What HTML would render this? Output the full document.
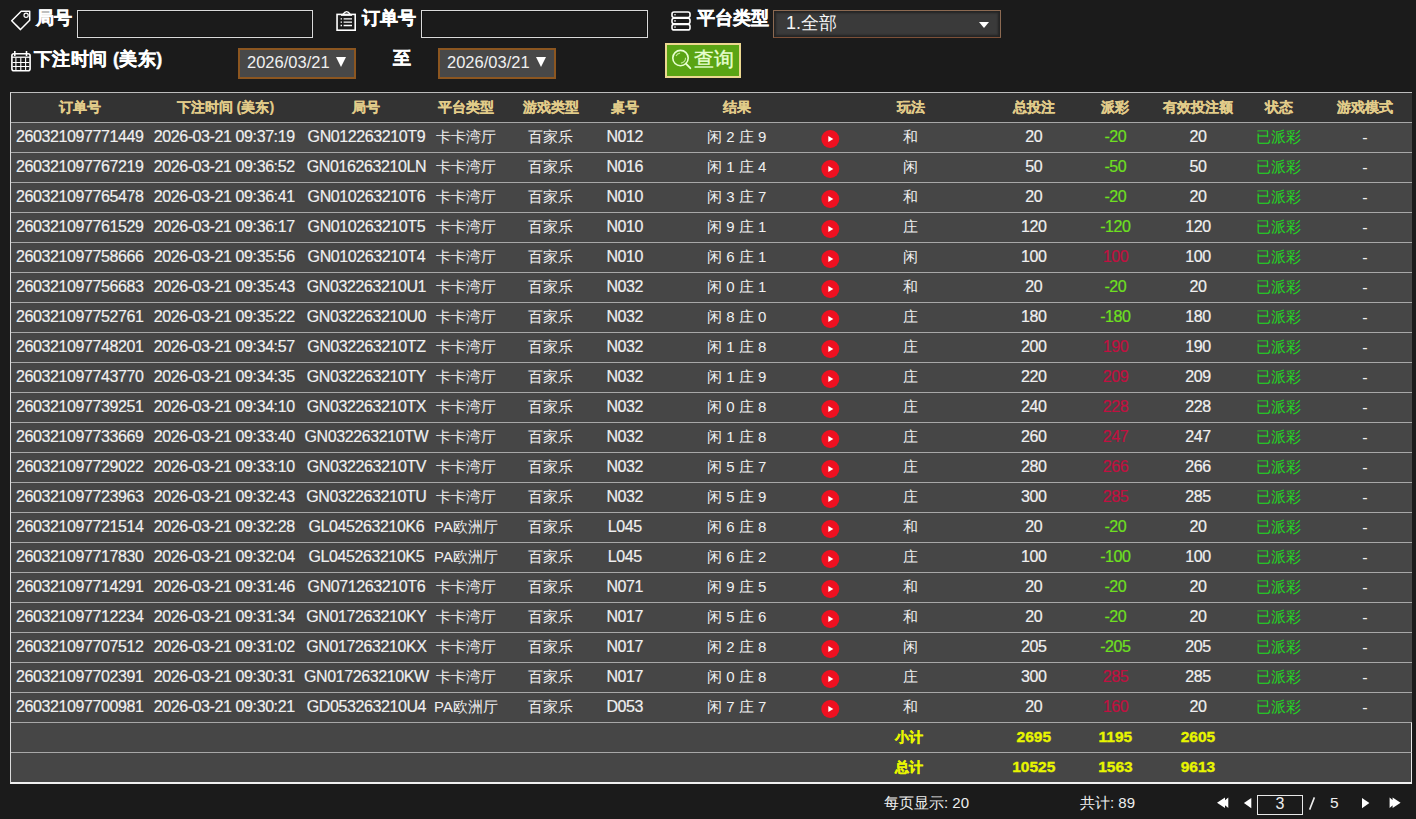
<!DOCTYPE html>
<html><head><meta charset="utf-8">
<style>
*{box-sizing:border-box;margin:0;padding:0}
html,body{width:1416px;height:819px;overflow:hidden;background:#1b1b1b;font-family:"Liberation Sans",sans-serif;color:#f0f0f0}
.abs{position:absolute}
.lbl{position:absolute;font-size:18px;font-weight:bold;-webkit-text-stroke:0.4px #fff;color:#fff;line-height:20px;white-space:nowrap}
.inp{position:absolute;border:1px solid #dadada;background:#1b1b1b;box-shadow:inset 0 0 0 1px #141414}
.sel{position:absolute;border:1px solid #8c6a52;border-bottom-color:#7c5038;background:#3a3a3a;box-shadow:inset 0 0 2px 2px #242424}
.date{position:absolute;border:2px solid #8c5620;background:#484848;color:#eee;font-size:16px;line-height:27px;padding-left:8px;white-space:nowrap}
.dtxt{position:absolute;font-size:16.5px;line-height:20px;color:#f0f0f0;white-space:nowrap}
.tri{position:absolute;width:0;height:0;border-left:5.6px solid transparent;border-right:5.6px solid transparent;border-top:10px solid #fff}
.btn{position:absolute;border:2px solid #ecd890;background:#5aa414;color:#e8ffd0;font-size:20px}
#tbl{position:absolute;left:10px;top:92px;width:1402px;height:692px;background:#464646;border-top:1px solid #bdbdbd;border-left:1px solid #dcdcdc;border-bottom:2px solid #f0f0f0}
.row{position:absolute;left:0;width:1401px;height:30px}
.tot{border-right:1px solid #e8e8e8}
.hdr{background:#333333;top:0;height:29px}
.sep{border-top:1px solid #a8a8a8}
.c{position:absolute;top:-1px;height:29px;line-height:29px;font-size:16px;letter-spacing:-0.4px;-webkit-text-stroke:0.2px currentColor;white-space:nowrap;transform:translateX(-50%)}
.h{color:#e2cc8a;font-weight:bold;top:0;font-size:14.4px;letter-spacing:0;-webkit-text-stroke:0.15px #e2cc8a}
.z{font-size:15px;letter-spacing:0;top:-1px;-webkit-text-stroke:0}
.dash{top:0;-webkit-text-stroke:0}
.g{color:#6ee020}
.r{color:#c01040}
.st{color:#22d822}
.y{color:#e8f500;font-weight:bold;-webkit-text-stroke:0.35px #e8f500;top:-1px;font-size:15.5px;letter-spacing:0}
.yz{font-size:14.4px;letter-spacing:0;top:0;margin-left:-1.5px}
.play{position:absolute;width:17.4px;height:18px;border-radius:50%;background:#ee1020;transform:translateX(-50%)}
.play:after{content:"";position:absolute;left:6.5px;top:5.7px;border-left:5.6px solid #fff;border-top:3.3px solid transparent;border-bottom:3.3px solid transparent}
.foot{position:absolute;font-size:15px;color:#eee;white-space:nowrap;line-height:18px}
</style></head><body>


<svg class="abs" style="left:0;top:0" width="40" height="40" viewBox="0 0 40 40"><path d="M11.7 20.8 L21.2 11.3 L29.7 11.3 L29.7 20.2 L20.5 29.6 Z" fill="none" stroke="#fff" stroke-width="1.5" stroke-linejoin="round"/><circle cx="26.1" cy="15.2" r="2.1" fill="none" stroke="#fff" stroke-width="1.2"/></svg>
<div class="lbl" style="left:36px;top:8px">局号</div>
<div class="inp" style="left:77px;top:10px;width:236px;height:28px"></div>
<svg class="abs" style="left:330px;top:0" width="30" height="40" viewBox="330 0 30 40"><rect x="337.05" y="14.4" width="18.15" height="15.8" fill="none" stroke="#fff" stroke-width="1.6"/><path d="M342.8 14.6 Q346.6 8.6 350.4 14.6" fill="none" stroke="#fff" stroke-width="1.4"/><path d="M341 15.3h11" stroke="#fff" stroke-width="1.1"/><path d="M340.6 18.8h1.4M343.6 18.8h8.4M340.6 22.2h1.4M343.6 22.2h8.4M340.6 25.5h1.4M343.6 25.5h8.4" stroke="#fff" stroke-width="1.3"/></svg>
<div class="lbl" style="left:362px;top:8px">订单号</div>
<div class="inp" style="left:421px;top:10px;width:227px;height:28px"></div>
<svg class="abs" style="left:671px;top:11px" width="20" height="20" viewBox="0 0 20 20"><rect x="1" y="1" width="18" height="5.5" rx="2" fill="none" stroke="#fff" stroke-width="1.6"/><rect x="1" y="7.2" width="18" height="5.5" rx="2" fill="none" stroke="#fff" stroke-width="1.6"/><rect x="1" y="13.4" width="18" height="5.5" rx="2" fill="none" stroke="#fff" stroke-width="1.6"/><circle cx="4" cy="3.7" r="0.8" fill="#fff"/><circle cx="4" cy="9.9" r="0.8" fill="#fff"/><circle cx="4" cy="16.1" r="0.8" fill="#fff"/></svg>
<div class="lbl" style="left:697px;top:8px">平台类型</div>
<div class="sel" style="left:773px;top:10px;width:228px;height:28px"></div>
<div class="abs" style="left:786px;top:11px;font-size:18px;line-height:24px;color:#f4f4f4">1.全部</div>
<div class="abs" style="left:979px;top:22px;width:0;height:0;border-left:5.5px solid transparent;border-right:5.5px solid transparent;border-top:6px solid #fff"></div>

<svg class="abs" style="left:0;top:40px" width="40" height="40" viewBox="0 40 40 40"><rect x="11.9" y="53.8" width="18.2" height="17" rx="2" fill="none" stroke="#fff" stroke-width="1.6"/><path d="M14.8 51.1v4.8M26.5 51.1v4.8" stroke="#fff" stroke-width="1.6"/><path d="M12 57.2h18" stroke="#fff" stroke-width="1.3"/><path d="M12.5 62.5h17M12.5 66.5h17M15.9 57.5v13M20.8 57.5v13M25.6 57.5v13" stroke="#fff" stroke-width="1.1" fill="none"/></svg>
<div class="lbl" style="left:34px;top:49px;letter-spacing:0.4px">下注时间 (美东)</div>
<div class="date" style="left:238px;top:48px;width:118px;height:31px"></div><div class="dtxt" style="left:247px;top:52px">2026/03/21</div><div class="tri" style="left:336px;top:57px"></div>
<div class="lbl" style="left:393px;top:48px">至</div>
<div class="date" style="left:438px;top:48px;width:118px;height:31px"></div><div class="dtxt" style="left:447px;top:52px">2026/03/21</div><div class="tri" style="left:536px;top:57px"></div>
<div class="btn" style="left:665px;top:43px;width:76px;height:35px"></div>
<svg class="abs" style="left:660px;top:40px" width="40" height="40" viewBox="660 40 40 40"><circle cx="680.5" cy="58.1" r="7.7" fill="none" stroke="#e8ffd0" stroke-width="1.6"/><path d="M685.9 63.6 L690.3 68.2" stroke="#e8ffd0" stroke-width="1.9" stroke-linecap="round"/><path d="M676 56 A5 5 0 0 1 680.1 53.1 M685.5 57.7 A5 5 0 0 1 680.9 63.1" fill="none" stroke="#d8f8b8" stroke-width="1.1" opacity="0.8"/></svg>
<div class="abs" style="left:694px;top:46px;font-size:20px;line-height:26px;color:#e8ffd0;-webkit-text-stroke:0.35px #e8ffd0">查询</div>

<div id="tbl">
<div class="row hdr"><span class="c h" style="left:68.7px">订单号</span><span class="c h" style="left:214.4px">下注时间 (美东)</span><span class="c h" style="left:355.4px">局号</span><span class="c h" style="left:455.0px">平台类型</span><span class="c h" style="left:539.5px">游戏类型</span><span class="c h" style="left:613.8px">桌号</span><span class="c h" style="left:725.8px">结果</span><span class="c h" style="left:899.8px">玩法</span><span class="c h" style="left:1022.8px">总投注</span><span class="c h" style="left:1104.4px">派彩</span><span class="c h" style="left:1186.9px">有效投注额</span><span class="c h" style="left:1268.2px">状态</span><span class="c h" style="left:1353.8px">游戏模式</span></div>
<div class="row sep" style="top:29px"><span class="c " style="left:68.7px">260321097771449</span><span class="c " style="left:213.2px">2026-03-21 09:37:19</span><span class="c " style="left:355.4px">GN012263210T9</span><span class="c z" style="left:455.0px">卡卡湾厅</span><span class="c z" style="left:539.5px">百家乐</span><span class="c " style="left:613.8px">N012</span><span class="c z" style="left:725.8px">闲 2 庄 9</span><span class="play" style="left:819.2px;top:7px"></span><span class="c z" style="left:899.8px">和</span><span class="c " style="left:1022.8px">20</span><span class="c g" style="left:1104.4px">-20</span><span class="c " style="left:1186.9px">20</span><span class="c st z" style="left:1267.2px">已派彩</span><span class="c dash" style="left:1353.8px">-</span></div>
<div class="row sep" style="top:59px"><span class="c " style="left:68.7px">260321097767219</span><span class="c " style="left:213.2px">2026-03-21 09:36:52</span><span class="c " style="left:355.4px">GN016263210LN</span><span class="c z" style="left:455.0px">卡卡湾厅</span><span class="c z" style="left:539.5px">百家乐</span><span class="c " style="left:613.8px">N016</span><span class="c z" style="left:725.8px">闲 1 庄 4</span><span class="play" style="left:819.2px;top:7px"></span><span class="c z" style="left:899.8px">闲</span><span class="c " style="left:1022.8px">50</span><span class="c g" style="left:1104.4px">-50</span><span class="c " style="left:1186.9px">50</span><span class="c st z" style="left:1267.2px">已派彩</span><span class="c dash" style="left:1353.8px">-</span></div>
<div class="row sep" style="top:89px"><span class="c " style="left:68.7px">260321097765478</span><span class="c " style="left:213.2px">2026-03-21 09:36:41</span><span class="c " style="left:355.4px">GN010263210T6</span><span class="c z" style="left:455.0px">卡卡湾厅</span><span class="c z" style="left:539.5px">百家乐</span><span class="c " style="left:613.8px">N010</span><span class="c z" style="left:725.8px">闲 3 庄 7</span><span class="play" style="left:819.2px;top:7px"></span><span class="c z" style="left:899.8px">和</span><span class="c " style="left:1022.8px">20</span><span class="c g" style="left:1104.4px">-20</span><span class="c " style="left:1186.9px">20</span><span class="c st z" style="left:1267.2px">已派彩</span><span class="c dash" style="left:1353.8px">-</span></div>
<div class="row sep" style="top:119px"><span class="c " style="left:68.7px">260321097761529</span><span class="c " style="left:213.2px">2026-03-21 09:36:17</span><span class="c " style="left:355.4px">GN010263210T5</span><span class="c z" style="left:455.0px">卡卡湾厅</span><span class="c z" style="left:539.5px">百家乐</span><span class="c " style="left:613.8px">N010</span><span class="c z" style="left:725.8px">闲 9 庄 1</span><span class="play" style="left:819.2px;top:7px"></span><span class="c z" style="left:899.8px">庄</span><span class="c " style="left:1022.8px">120</span><span class="c g" style="left:1104.4px">-120</span><span class="c " style="left:1186.9px">120</span><span class="c st z" style="left:1267.2px">已派彩</span><span class="c dash" style="left:1353.8px">-</span></div>
<div class="row sep" style="top:149px"><span class="c " style="left:68.7px">260321097758666</span><span class="c " style="left:213.2px">2026-03-21 09:35:56</span><span class="c " style="left:355.4px">GN010263210T4</span><span class="c z" style="left:455.0px">卡卡湾厅</span><span class="c z" style="left:539.5px">百家乐</span><span class="c " style="left:613.8px">N010</span><span class="c z" style="left:725.8px">闲 6 庄 1</span><span class="play" style="left:819.2px;top:7px"></span><span class="c z" style="left:899.8px">闲</span><span class="c " style="left:1022.8px">100</span><span class="c r" style="left:1104.4px">100</span><span class="c " style="left:1186.9px">100</span><span class="c st z" style="left:1267.2px">已派彩</span><span class="c dash" style="left:1353.8px">-</span></div>
<div class="row sep" style="top:179px"><span class="c " style="left:68.7px">260321097756683</span><span class="c " style="left:213.2px">2026-03-21 09:35:43</span><span class="c " style="left:355.4px">GN032263210U1</span><span class="c z" style="left:455.0px">卡卡湾厅</span><span class="c z" style="left:539.5px">百家乐</span><span class="c " style="left:613.8px">N032</span><span class="c z" style="left:725.8px">闲 0 庄 1</span><span class="play" style="left:819.2px;top:7px"></span><span class="c z" style="left:899.8px">和</span><span class="c " style="left:1022.8px">20</span><span class="c g" style="left:1104.4px">-20</span><span class="c " style="left:1186.9px">20</span><span class="c st z" style="left:1267.2px">已派彩</span><span class="c dash" style="left:1353.8px">-</span></div>
<div class="row sep" style="top:209px"><span class="c " style="left:68.7px">260321097752761</span><span class="c " style="left:213.2px">2026-03-21 09:35:22</span><span class="c " style="left:355.4px">GN032263210U0</span><span class="c z" style="left:455.0px">卡卡湾厅</span><span class="c z" style="left:539.5px">百家乐</span><span class="c " style="left:613.8px">N032</span><span class="c z" style="left:725.8px">闲 8 庄 0</span><span class="play" style="left:819.2px;top:7px"></span><span class="c z" style="left:899.8px">庄</span><span class="c " style="left:1022.8px">180</span><span class="c g" style="left:1104.4px">-180</span><span class="c " style="left:1186.9px">180</span><span class="c st z" style="left:1267.2px">已派彩</span><span class="c dash" style="left:1353.8px">-</span></div>
<div class="row sep" style="top:239px"><span class="c " style="left:68.7px">260321097748201</span><span class="c " style="left:213.2px">2026-03-21 09:34:57</span><span class="c " style="left:355.4px">GN032263210TZ</span><span class="c z" style="left:455.0px">卡卡湾厅</span><span class="c z" style="left:539.5px">百家乐</span><span class="c " style="left:613.8px">N032</span><span class="c z" style="left:725.8px">闲 1 庄 8</span><span class="play" style="left:819.2px;top:7px"></span><span class="c z" style="left:899.8px">庄</span><span class="c " style="left:1022.8px">200</span><span class="c r" style="left:1104.4px">190</span><span class="c " style="left:1186.9px">190</span><span class="c st z" style="left:1267.2px">已派彩</span><span class="c dash" style="left:1353.8px">-</span></div>
<div class="row sep" style="top:269px"><span class="c " style="left:68.7px">260321097743770</span><span class="c " style="left:213.2px">2026-03-21 09:34:35</span><span class="c " style="left:355.4px">GN032263210TY</span><span class="c z" style="left:455.0px">卡卡湾厅</span><span class="c z" style="left:539.5px">百家乐</span><span class="c " style="left:613.8px">N032</span><span class="c z" style="left:725.8px">闲 1 庄 9</span><span class="play" style="left:819.2px;top:7px"></span><span class="c z" style="left:899.8px">庄</span><span class="c " style="left:1022.8px">220</span><span class="c r" style="left:1104.4px">209</span><span class="c " style="left:1186.9px">209</span><span class="c st z" style="left:1267.2px">已派彩</span><span class="c dash" style="left:1353.8px">-</span></div>
<div class="row sep" style="top:299px"><span class="c " style="left:68.7px">260321097739251</span><span class="c " style="left:213.2px">2026-03-21 09:34:10</span><span class="c " style="left:355.4px">GN032263210TX</span><span class="c z" style="left:455.0px">卡卡湾厅</span><span class="c z" style="left:539.5px">百家乐</span><span class="c " style="left:613.8px">N032</span><span class="c z" style="left:725.8px">闲 0 庄 8</span><span class="play" style="left:819.2px;top:7px"></span><span class="c z" style="left:899.8px">庄</span><span class="c " style="left:1022.8px">240</span><span class="c r" style="left:1104.4px">228</span><span class="c " style="left:1186.9px">228</span><span class="c st z" style="left:1267.2px">已派彩</span><span class="c dash" style="left:1353.8px">-</span></div>
<div class="row sep" style="top:329px"><span class="c " style="left:68.7px">260321097733669</span><span class="c " style="left:213.2px">2026-03-21 09:33:40</span><span class="c " style="left:355.4px">GN032263210TW</span><span class="c z" style="left:455.0px">卡卡湾厅</span><span class="c z" style="left:539.5px">百家乐</span><span class="c " style="left:613.8px">N032</span><span class="c z" style="left:725.8px">闲 1 庄 8</span><span class="play" style="left:819.2px;top:7px"></span><span class="c z" style="left:899.8px">庄</span><span class="c " style="left:1022.8px">260</span><span class="c r" style="left:1104.4px">247</span><span class="c " style="left:1186.9px">247</span><span class="c st z" style="left:1267.2px">已派彩</span><span class="c dash" style="left:1353.8px">-</span></div>
<div class="row sep" style="top:359px"><span class="c " style="left:68.7px">260321097729022</span><span class="c " style="left:213.2px">2026-03-21 09:33:10</span><span class="c " style="left:355.4px">GN032263210TV</span><span class="c z" style="left:455.0px">卡卡湾厅</span><span class="c z" style="left:539.5px">百家乐</span><span class="c " style="left:613.8px">N032</span><span class="c z" style="left:725.8px">闲 5 庄 7</span><span class="play" style="left:819.2px;top:7px"></span><span class="c z" style="left:899.8px">庄</span><span class="c " style="left:1022.8px">280</span><span class="c r" style="left:1104.4px">266</span><span class="c " style="left:1186.9px">266</span><span class="c st z" style="left:1267.2px">已派彩</span><span class="c dash" style="left:1353.8px">-</span></div>
<div class="row sep" style="top:389px"><span class="c " style="left:68.7px">260321097723963</span><span class="c " style="left:213.2px">2026-03-21 09:32:43</span><span class="c " style="left:355.4px">GN032263210TU</span><span class="c z" style="left:455.0px">卡卡湾厅</span><span class="c z" style="left:539.5px">百家乐</span><span class="c " style="left:613.8px">N032</span><span class="c z" style="left:725.8px">闲 5 庄 9</span><span class="play" style="left:819.2px;top:7px"></span><span class="c z" style="left:899.8px">庄</span><span class="c " style="left:1022.8px">300</span><span class="c r" style="left:1104.4px">285</span><span class="c " style="left:1186.9px">285</span><span class="c st z" style="left:1267.2px">已派彩</span><span class="c dash" style="left:1353.8px">-</span></div>
<div class="row sep" style="top:419px"><span class="c " style="left:68.7px">260321097721514</span><span class="c " style="left:213.2px">2026-03-21 09:32:28</span><span class="c " style="left:355.4px">GL045263210K6</span><span class="c z" style="left:455.0px">PA欧洲厅</span><span class="c z" style="left:539.5px">百家乐</span><span class="c " style="left:613.8px">L045</span><span class="c z" style="left:725.8px">闲 6 庄 8</span><span class="play" style="left:819.2px;top:7px"></span><span class="c z" style="left:899.8px">和</span><span class="c " style="left:1022.8px">20</span><span class="c g" style="left:1104.4px">-20</span><span class="c " style="left:1186.9px">20</span><span class="c st z" style="left:1267.2px">已派彩</span><span class="c dash" style="left:1353.8px">-</span></div>
<div class="row sep" style="top:449px"><span class="c " style="left:68.7px">260321097717830</span><span class="c " style="left:213.2px">2026-03-21 09:32:04</span><span class="c " style="left:355.4px">GL045263210K5</span><span class="c z" style="left:455.0px">PA欧洲厅</span><span class="c z" style="left:539.5px">百家乐</span><span class="c " style="left:613.8px">L045</span><span class="c z" style="left:725.8px">闲 6 庄 2</span><span class="play" style="left:819.2px;top:7px"></span><span class="c z" style="left:899.8px">庄</span><span class="c " style="left:1022.8px">100</span><span class="c g" style="left:1104.4px">-100</span><span class="c " style="left:1186.9px">100</span><span class="c st z" style="left:1267.2px">已派彩</span><span class="c dash" style="left:1353.8px">-</span></div>
<div class="row sep" style="top:479px"><span class="c " style="left:68.7px">260321097714291</span><span class="c " style="left:213.2px">2026-03-21 09:31:46</span><span class="c " style="left:355.4px">GN071263210T6</span><span class="c z" style="left:455.0px">卡卡湾厅</span><span class="c z" style="left:539.5px">百家乐</span><span class="c " style="left:613.8px">N071</span><span class="c z" style="left:725.8px">闲 9 庄 5</span><span class="play" style="left:819.2px;top:7px"></span><span class="c z" style="left:899.8px">和</span><span class="c " style="left:1022.8px">20</span><span class="c g" style="left:1104.4px">-20</span><span class="c " style="left:1186.9px">20</span><span class="c st z" style="left:1267.2px">已派彩</span><span class="c dash" style="left:1353.8px">-</span></div>
<div class="row sep" style="top:509px"><span class="c " style="left:68.7px">260321097712234</span><span class="c " style="left:213.2px">2026-03-21 09:31:34</span><span class="c " style="left:355.4px">GN017263210KY</span><span class="c z" style="left:455.0px">卡卡湾厅</span><span class="c z" style="left:539.5px">百家乐</span><span class="c " style="left:613.8px">N017</span><span class="c z" style="left:725.8px">闲 5 庄 6</span><span class="play" style="left:819.2px;top:7px"></span><span class="c z" style="left:899.8px">和</span><span class="c " style="left:1022.8px">20</span><span class="c g" style="left:1104.4px">-20</span><span class="c " style="left:1186.9px">20</span><span class="c st z" style="left:1267.2px">已派彩</span><span class="c dash" style="left:1353.8px">-</span></div>
<div class="row sep" style="top:539px"><span class="c " style="left:68.7px">260321097707512</span><span class="c " style="left:213.2px">2026-03-21 09:31:02</span><span class="c " style="left:355.4px">GN017263210KX</span><span class="c z" style="left:455.0px">卡卡湾厅</span><span class="c z" style="left:539.5px">百家乐</span><span class="c " style="left:613.8px">N017</span><span class="c z" style="left:725.8px">闲 2 庄 8</span><span class="play" style="left:819.2px;top:7px"></span><span class="c z" style="left:899.8px">闲</span><span class="c " style="left:1022.8px">205</span><span class="c g" style="left:1104.4px">-205</span><span class="c " style="left:1186.9px">205</span><span class="c st z" style="left:1267.2px">已派彩</span><span class="c dash" style="left:1353.8px">-</span></div>
<div class="row sep" style="top:569px"><span class="c " style="left:68.7px">260321097702391</span><span class="c " style="left:213.2px">2026-03-21 09:30:31</span><span class="c " style="left:355.4px">GN017263210KW</span><span class="c z" style="left:455.0px">卡卡湾厅</span><span class="c z" style="left:539.5px">百家乐</span><span class="c " style="left:613.8px">N017</span><span class="c z" style="left:725.8px">闲 0 庄 8</span><span class="play" style="left:819.2px;top:7px"></span><span class="c z" style="left:899.8px">庄</span><span class="c " style="left:1022.8px">300</span><span class="c r" style="left:1104.4px">285</span><span class="c " style="left:1186.9px">285</span><span class="c st z" style="left:1267.2px">已派彩</span><span class="c dash" style="left:1353.8px">-</span></div>
<div class="row sep" style="top:599px"><span class="c " style="left:68.7px">260321097700981</span><span class="c " style="left:213.2px">2026-03-21 09:30:21</span><span class="c " style="left:355.4px">GD053263210U4</span><span class="c z" style="left:455.0px">PA欧洲厅</span><span class="c z" style="left:539.5px">百家乐</span><span class="c " style="left:613.8px">D053</span><span class="c z" style="left:725.8px">闲 7 庄 7</span><span class="play" style="left:819.2px;top:7px"></span><span class="c z" style="left:899.8px">和</span><span class="c " style="left:1022.8px">20</span><span class="c r" style="left:1104.4px">160</span><span class="c " style="left:1186.9px">20</span><span class="c st z" style="left:1267.2px">已派彩</span><span class="c dash" style="left:1353.8px">-</span></div>
<div class="row sep tot" style="top:629px"><span class="c y yz" style="left:899.8px">小计</span><span class="c y" style="left:1022.8px">2695</span><span class="c y" style="left:1104.4px">1195</span><span class="c y" style="left:1186.9px">2605</span></div>
<div class="row sep tot" style="top:659px"><span class="c y yz" style="left:899.8px">总计</span><span class="c y" style="left:1022.8px">10525</span><span class="c y" style="left:1104.4px">1563</span><span class="c y" style="left:1186.9px">9613</span></div>
</div>

<div class="foot" style="left:884px;top:794px">每页显示: 20</div>
<div class="foot" style="left:1080px;top:794px">共计: 89</div>
<svg class="abs" style="left:1210px;top:790px" width="206" height="25" viewBox="1210 790 206 25">
<path d="M1217 802.8 L1225 797.6 L1225 808 Z M1222 802.8 L1228.3 797.6 L1228.3 808 Z" fill="#fff"/>
<path d="M1243.9 803 L1251.3 798 L1251.3 808.2 Z" fill="#fff"/>
<path d="M1369.4 803 L1362 798 L1362 808.2 Z" fill="#fff"/>
<path d="M1400.6 802.8 L1392.6 797.6 L1392.6 808 Z M1395.6 802.8 L1389.6 797.6 L1389.6 808 Z" fill="#fff"/>
</svg>
<div class="abs" style="left:1257px;top:795px;width:46px;height:20px;border:1px solid #e8e8e8;font-size:16px;line-height:15px;text-align:center;color:#eee">3</div>
<svg class="abs" style="left:1300px;top:790px" width="30" height="25" viewBox="1300 790 30 25"><path d="M1309.6 809.6 L1314.4 797.4" stroke="#eee" stroke-width="1.6"/></svg>
<div class="foot" style="left:1330px;top:794px;font-size:15.5px">5</div>

</body></html>
